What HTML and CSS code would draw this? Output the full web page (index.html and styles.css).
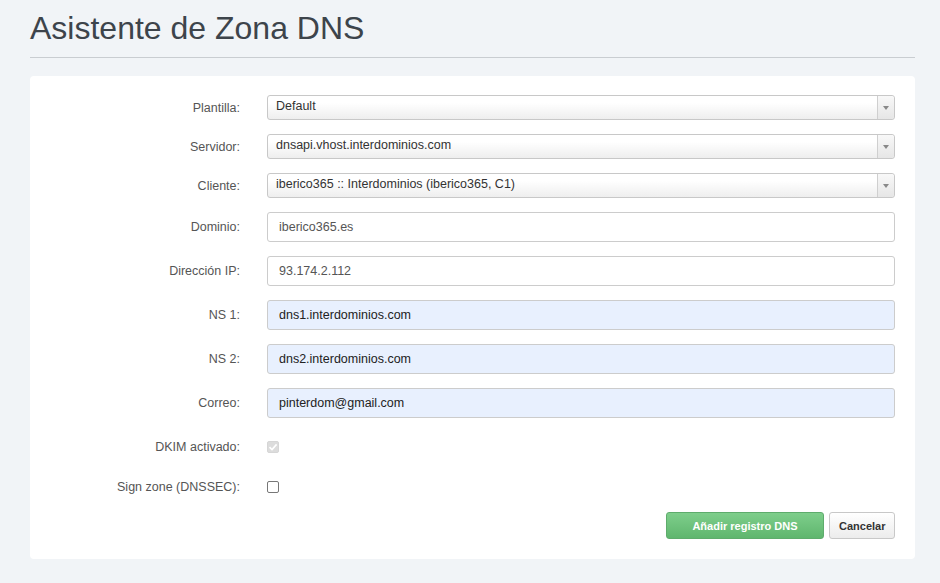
FILE: index.html
```html
<!DOCTYPE html>
<html lang="es">
<head>
    <meta charset="UTF-8">
    <meta name="viewport" content="width=device-width, initial-scale=1.0">
    <title>Asistente de Zona DNS</title>
    <link rel="stylesheet" href="styles.css">
</head>
<body>
    <div class="page">
        <h1 class="page-title">Asistente de Zona DNS</h1>

        <div class="panel">
            <form class="dns-form">
                <label class="form-label">Plantilla:</label>
                <div class="fake-select">
                    <span class="select-value">Default</span>
                    <span class="select-arrow"></span>
                </div>

                <label class="form-label">Servidor:</label>
                <div class="fake-select">
                    <span class="select-value">dnsapi.vhost.interdominios.com</span>
                    <span class="select-arrow"></span>
                </div>

                <label class="form-label">Cliente:</label>
                <div class="fake-select">
                    <span class="select-value">iberico365 :: Interdominios (iberico365, C1)</span>
                    <span class="select-arrow"></span>
                </div>

                <label class="form-label">Dominio:</label>
                <input class="text-input" type="text" value="iberico365.es">

                <label class="form-label">Dirección IP:</label>
                <input class="text-input" type="text" value="93.174.2.112">

                <label class="form-label">NS 1:</label>
                <input class="text-input autofill" type="text" value="dns1.interdominios.com">

                <label class="form-label">NS 2:</label>
                <input class="text-input autofill" type="text" value="dns2.interdominios.com">

                <label class="form-label">Correo:</label>
                <input class="text-input autofill" type="text" value="pinterdom@gmail.com">

                <label class="form-label">DKIM activado:</label>
                <div class="check-cell first-check">
                    <span class="checkbox disabled">
                        <svg width="10" height="10" viewBox="0 0 10 10"><path d="M1.5 5.2 L4 7.6 L8.6 2.4" fill="none" stroke="#fff" stroke-width="1.6"/></svg>
                    </span>
                </div>

                <label class="form-label">Sign zone (DNSSEC):</label>
                <div class="check-cell">
                    <span class="checkbox"></span>
                </div>

                <div class="form-actions">
                    <button type="button" class="btn btn-success">Añadir registro DNS</button>
                    <button type="button" class="btn btn-default">Cancelar</button>
                </div>
            </form>
        </div>
    </div>
</body>
</html>
```

FILE: styles.css
```css
body, html {
    margin: 0;
    padding: 0;
    font-family: "Liberation Sans", Arial, sans-serif;
    background-color: #f1f4f7;
    color: #333;
}

.page {
    padding: 0 25px 0 30px;
}

.page-title {
    margin: 0;
    padding: 10px 0 11px;
    font-size: 32px;
    line-height: 36px;
    font-weight: normal;
    color: #3d444b;
    border-bottom: 1px solid #c9cdd1;
}

.panel {
    margin-top: 18px;
    background-color: #fff;
    border-radius: 4px;
    padding: 19px 20px 20px 20px;
}

.dns-form {
    display: grid;
    grid-template-columns: 190px 1fr;
    column-gap: 27px;
    row-gap: 14px;
    align-items: center;
}

.form-label {
    text-align: right;
    font-size: 12.5px;
    color: #555;
}

.fake-select {
    display: flex;
    height: 23px;
    border: 1px solid #c8c8c8;
    border-radius: 3px;
    background: linear-gradient(#ffffff 30%, #eeeeee);
    font-size: 12.5px;
    color: #333;
}

.select-value {
    flex: 1;
    padding-left: 8px;
    line-height: 21px;
}

.select-arrow {
    width: 16px;
    border-left: 1px solid #cfcfcf;
    background: linear-gradient(#f8f8f8, #e6e6e6);
    border-radius: 0 3px 3px 0;
    display: flex;
    align-items: center;
    justify-content: center;
}

.select-arrow::after {
    content: "";
    border-left: 3px solid transparent;
    border-right: 3px solid transparent;
    border-top: 4px solid #888;
}

.text-input {
    box-sizing: border-box;
    height: 30px;
    width: 100%;
    margin: 0;
    padding: 0 11px;
    border: 1px solid #ccc;
    border-radius: 3px;
    font-family: inherit;
    font-size: 12.5px;
    color: #555;
    background-color: #fff;
}

.text-input.autofill {
    background-color: #e8f0fe;
    color: #222;
}

.check-cell {
    height: 24px;
    display: flex;
    align-items: center;
}

.check-cell.first-check {
    height: 29px;
}

.checkbox {
    box-sizing: border-box;
    width: 12px;
    height: 12px;
    border: 1px solid #777;
    border-radius: 2px;
    background-color: #fff;
    display: flex;
    align-items: center;
    justify-content: center;
}

.checkbox.disabled {
    border-color: #d6d6d6;
    background-color: #dcdcdc;
}

.form-actions {
    grid-column: 1 / 3;
    display: flex;
    justify-content: flex-end;
    gap: 5px;
    margin-top: -1px;
}

.btn {
    height: 27px;
    border-radius: 3px;
    font-family: inherit;
    font-size: 11px;
    font-weight: bold;
    cursor: pointer;
    padding: 0 9px;
}

.btn-success {
    width: 158px;
    color: #fff;
    border: 1px solid #5eac6c;
    background: linear-gradient(#7ece8b, #5fb66e);
}

.btn-default {
    width: 66px;
    color: #333;
    border: 1px solid #c8c8c8;
    background: linear-gradient(#ffffff, #ececec);
}
```
